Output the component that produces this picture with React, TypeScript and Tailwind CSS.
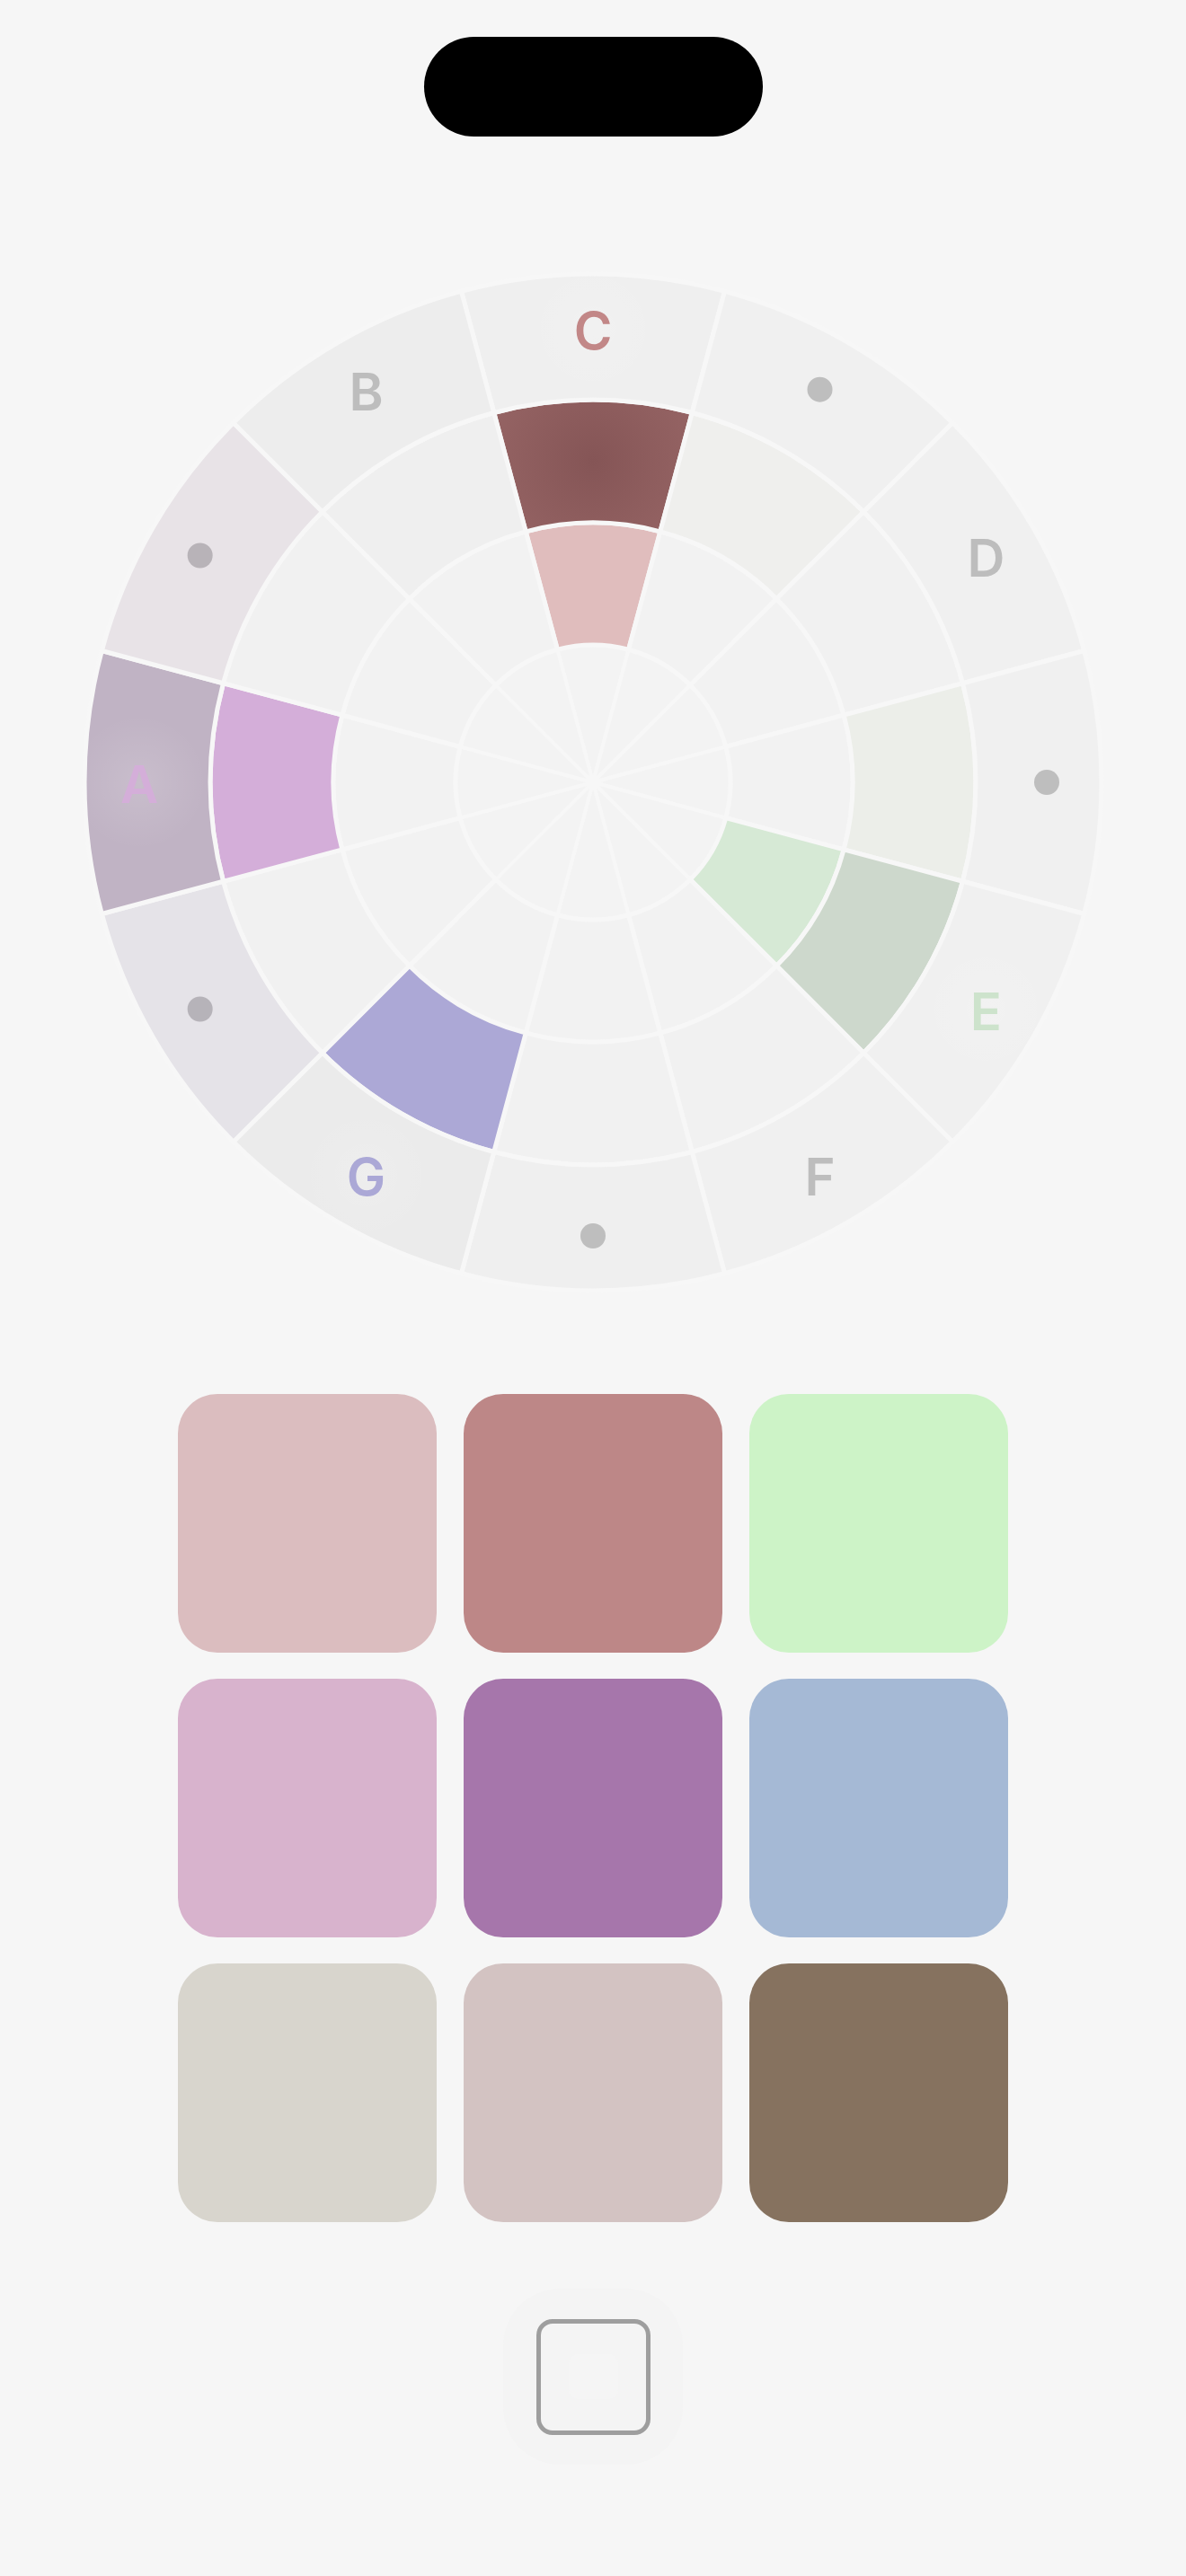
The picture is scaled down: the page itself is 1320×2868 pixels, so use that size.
import React from "react";

// Chromatic wheel: 12 notes, C at the top, going clockwise
const SIZE = 1140;
const C = SIZE / 2;
const RADII = [0, 153, 289, 426, 566];

const DEFAULT_RING = ["#f3f3f3", "#f2f2f2", "#f1f1f1", "#f0f0f0"];

// colours per ring (inner -> outer), per step (0 = C)
const ringColors: Record<number, Record<number, string>> = {
    1: { 0: "#e0bdbd", 4: "#d6e9d5" },
    2: { 0: "url(#cDark)", 1: "#efefed", 3: "#eceee9", 4: "#cdd8cc", 7: "#aca8d6", 9: "#d4aed9", 11: "#efefef" },
    3: { 0: "#efefef", 6: "#efefef", 7: "#ebebeb", 8: "#e5e3e8", 9: "#c0b3c4", 10: "#e8e3e7", 11: "#ededed" },
};

type Mark = { step: number; text?: string; color: string; glow?: boolean };

const marks: Mark[] = [
    { step: 0, text: "C", color: "#c28787", glow: true },
    { step: 1, color: "#bebebe" },
    { step: 2, text: "D", color: "#bdbdbd" },
    { step: 3, color: "#bebebe" },
    { step: 4, text: "E", color: "#cde3cc", glow: true },
    { step: 5, text: "F", color: "#bdbdbd" },
    { step: 6, color: "#bebebe" },
    { step: 7, text: "G", color: "#aba8d6", glow: true },
    { step: 8, color: "#b6b3b9" },
    { step: 9, text: "A", color: "#d4aed9", glow: true },
    { step: 10, color: "#b8b3b8" },
    { step: 11, text: "B", color: "#bdbdbd" },
];

const swatches = [
    "#dbbdbf", "#bd8787", "#cdf3c7",
    "#d8b3cd", "#a676ab", "#a5b9d5",
    "#d8d5cd", "#d3c3c2", "#86725f",
];

function pt(r: number, deg: number) {
    const a = (deg * Math.PI) / 180;
    return [C + r * Math.sin(a), C - r * Math.cos(a)];
}

function sector(r0: number, r1: number, a0: number, a1: number) {
    const [ox0, oy0] = pt(r1, a0);
    const [ox1, oy1] = pt(r1, a1);
    if (r0 === 0) {
        return `M ${C} ${C} L ${ox0} ${oy0} A ${r1} ${r1} 0 0 1 ${ox1} ${oy1} Z`;
    }
    const [ix1, iy1] = pt(r0, a1);
    const [ix0, iy0] = pt(r0, a0);
    return `M ${ox0} ${oy0} A ${r1} ${r1} 0 0 1 ${ox1} ${oy1} L ${ix1} ${iy1} A ${r0} ${r0} 0 0 0 ${ix0} ${iy0} Z`;
}

function NoteWheel() {
    const LABEL_R = 505;
    return (
        <svg width={SIZE} height={SIZE} viewBox={`0 0 ${SIZE} ${SIZE}`} className="mt-[149px] block">
            <defs>
                <radialGradient id="cDark" gradientUnits="userSpaceOnUse" cx={C} cy={C - 357} r={160}>
                    <stop offset="0%" stopColor="#855556" />
                    <stop offset="100%" stopColor="#9a6868" />
                </radialGradient>
                <radialGradient id="glow">
                    <stop offset="0%" stopColor="#ffffff" stopOpacity="0.14" />
                    <stop offset="100%" stopColor="#ffffff" stopOpacity="0" />
                </radialGradient>
            </defs>

            {[0, 1, 2, 3].map((ring) =>
                Array.from({ length: 12 }).map((_, step) => (
                    <path
                        key={`${ring}-${step}`}
                        d={sector(RADII[ring], RADII[ring + 1], step * 30 - 15, step * 30 + 15)}
                        fill={ringColors[ring]?.[step] ?? DEFAULT_RING[ring]}
                        stroke="#f7f7f7"
                        strokeWidth={ring === 0 ? 4 : 5}
                        strokeLinejoin="round"
                    />
                ))
            )}

            {marks.map((m) => {
                const [x, y] = pt(LABEL_R, m.step * 30);
                return (
                    <g key={m.step}>
                        {m.glow && <circle cx={x} cy={y} r={75} fill="url(#glow)" />}
                        {m.text ? (
                            <text
                                x={x}
                                y={y + 2}
                                textAnchor="middle"
                                dominantBaseline="central"
                                fill={m.color}
                                fontSize={58}
                                fontWeight={600}
                                fontFamily="Inter, 'Noto Sans', sans-serif"
                            >
                                {m.text}
                            </text>
                        ) : (
                            <circle cx={x} cy={y} r={14} fill={m.color} />
                        )}
                    </g>
                );
            })}
        </svg>
    );
}

export default function App() {
    return (
        <div className="min-h-[2868px] w-full bg-[#f6f6f6] flex flex-col items-center">
            {/* dynamic island */}
            <div className="mt-[41px] w-[377px] h-[111px] rounded-full bg-black" />

            <NoteWheel />

            {/* palette */}
            <div className="mt-[111px] grid grid-cols-3 gap-x-[30px] gap-y-[29px]">
                {swatches.map((color) => (
                    <div key={color} className="w-[288px] h-[288px] rounded-[44px]" style={{ backgroundColor: color }} />
                ))}
            </div>

            {/* stop button */}
            <button
                type="button"
                className="mt-[74px] w-[200px] h-[196px] rounded-[64px] bg-[#f4f4f4] flex items-center justify-center"
            >
                <div className="w-[127px] h-[129px] rounded-[18px] border-[5px] border-[#9e9e9e] flex items-center justify-center">
                    <div className="w-[55px] h-[50px] rounded-[10px] bg-[#f5f5f5]" />
                </div>
            </button>
        </div>
    );
}
